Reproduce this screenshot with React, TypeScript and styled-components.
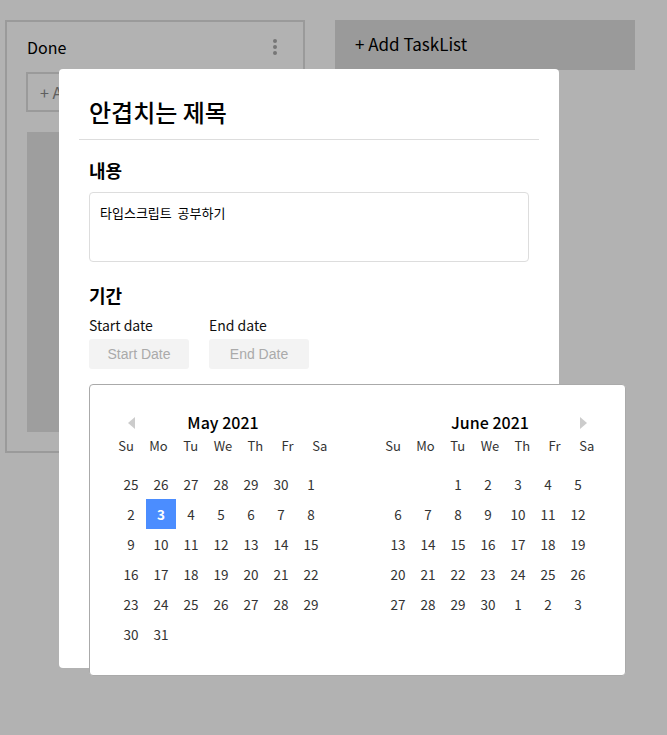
import React from 'react';
import styled, { createGlobalStyle } from 'styled-components';

const GlobalStyle = createGlobalStyle`
	* {
		box-sizing: border-box;
	}
	body {
		margin: 0;
		background: #ffffff;
		font-family: 'Noto Sans CJK KR', 'Noto Sans', sans-serif;
		color: #000;
	}
`;

const Board = styled.main`
	display: flex;
	align-items: flex-start;
	gap: 30px;
	padding: 20px 0 0 5px;
`;

const List = styled.section`
	width: 300px;
	height: 433px;
	border: 2px solid #dddddd;
	padding: 0 20px 19px 19px;
	display: flex;
	flex-direction: column;
`;

const ListHeader = styled.header`
	height: 50px;
	display: flex;
	align-items: center;
	justify-content: space-between;
	padding: 0 6px 0 1px;
	font-size: 16px;
`;

const AddTask = styled.div`
	height: 40px;
	border: 2px solid #dddddd;
	display: flex;
	align-items: center;
	padding-left: 12px;
	font-size: 16px;
	color: #888;
`;

const TaskBlock = styled.div`
	flex: 1;
	margin: 20px 0 0 1px;
	background: #e2e2e2;
`;

const AddList = styled.div`
	width: 300px;
	height: 50px;
	background: #dddddd;
	display: flex;
	align-items: center;
	padding: 0 0 3px 20px;
	font-size: 17px;
`;

const Overlay = styled.div`
	position: fixed;
	inset: 0;
	background: rgba(0, 0, 0, 0.3);
	padding: 69px 0 0 59px;
`;

const Modal = styled.div`
	width: 500px;
	height: 599px;
	background: #fff;
	border-radius: 4px;
`;

const ModalHeader = styled.div`
	margin: 0 20px;
	padding: 25px 10px 9px;
	border-bottom: 1px solid #dddddd;
`;

const Title = styled.h2`
	margin: 0;
	font-size: 24px;
	font-weight: 500;
	line-height: 36px;
`;

const ModalBody = styled.div`
	padding: 0 30px;
`;

const Label = styled.h3<{ $top: number }>`
	margin: ${({ $top }) => $top}px 0 0;
	font-size: 18px;
	font-weight: 700;
	line-height: 27px;
`;

const Content = styled.div`
	margin-top: 8px;
	height: 70px;
	border: 1px solid #dddddd;
	border-radius: 4px;
	padding: 10px;
	font-size: 13px;
	line-height: 20px;
	white-space: pre;
`;

const DateRow = styled.div`
	position: relative;
	display: flex;
	gap: 20px;
	margin-top: 6px;
`;

const DateField = styled.label`
	display: flex;
	flex-direction: column;
	gap: 4px;
	width: 100px;
	font-size: 14px;
	line-height: 20px;
	color: #111;
`;

const DateInput = styled.input`
	width: 100px;
	height: 30px;
	border: none;
	border-radius: 3px;
	background: #f3f3f3;
	text-align: center;
	font-family: 'Liberation Sans', Arial, sans-serif;
	font-size: 14px;

	&::placeholder {
		color: #aaaaaa;
	}
`;

const Picker = styled.div`
	position: absolute;
	top: calc(100% + 15px);
	left: 0;
	width: 537px;
	height: 292px;
	background: #fff;
	border: 1px solid #aaaaaa;
	border-radius: 4px;
	padding-top: 27px;
	display: flex;
`;

const Arrow = styled.span<{ $side: 'left' | 'right' }>`
	position: absolute;
	top: 32px;
	${({ $side }) => ($side === 'left' ? 'left: 38px;' : 'right: 38px;')}
	width: 0;
	height: 0;
	border-top: 6px solid transparent;
	border-bottom: 6px solid transparent;
	${({ $side }) =>
		$side === 'left' ? 'border-right: 7px solid #cccccc;' : 'border-left: 7px solid #cccccc;'}
`;

const Month = styled.div`
	width: 267px;
	padding-left: 20px;
`;

const MonthTitle = styled.div`
	width: 226px;
	text-align: center;
	font-size: 16px;
	font-weight: 500;
	line-height: 20px;
`;

const DayNames = styled.div`
	width: 226px;
	display: grid;
	grid-template-columns: repeat(7, 1fr);
	height: 26px;
	align-items: center;
	font-size: 13px;
	color: #333;
	text-align: center;
`;

const Days = styled.div`
	margin: 11px 0 0 6px;
	width: 210px;
	display: grid;
	grid-template-columns: repeat(7, 30px);
	grid-auto-rows: 30px;
`;

const Day = styled.span<{ $selected?: boolean }>`
	display: flex;
	align-items: center;
	justify-content: center;
	font-size: 13.5px;
	color: ${({ $selected }) => ($selected ? '#fff' : '#333')};
	background: ${({ $selected }) => ($selected ? '#4b8dff' : 'transparent')};
	font-weight: ${({ $selected }) => ($selected ? 700 : 400)};
`;

const Dots = () => (
	<svg width="4" height="16" viewBox="0 0 4 16">
		<circle cx="2" cy="2" r="2" fill="#aaa" />
		<circle cx="2" cy="8" r="2" fill="#aaa" />
		<circle cx="2" cy="14" r="2" fill="#aaa" />
	</svg>
);

const weekdays = ['Su', 'Mo', 'Tu', 'We', 'Th', 'Fr', 'Sa'];

const range = (from: number, to: number) =>
	Array.from({ length: to - from + 1 }, (_, i) => String(from + i));

const months = [
	{
		title: 'May 2021',
		days: [...range(25, 30), ...range(1, 31)],
		selected: 8,
	},
	{
		title: 'June 2021',
		days: ['', '', ...range(1, 30), ...range(1, 3)],
		selected: -1,
	},
];

const App = () => {
	return (
		<>
			<GlobalStyle />
			<Board>
				<List>
					<ListHeader>
						<span>Done</span>
						<Dots />
					</ListHeader>
					<AddTask>+ Add Task</AddTask>
					<TaskBlock />
				</List>
				<AddList>+ Add TaskList</AddList>
			</Board>
			<Overlay>
				<Modal>
					<ModalHeader>
						<Title>안겹치는 제목</Title>
					</ModalHeader>
					<ModalBody>
						<Label $top={17}>내용</Label>
						<Content>{'타입스크립트  공부하기'}</Content>
						<Label $top={20}>기간</Label>
						<DateRow>
							<DateField>
								Start date
								<DateInput placeholder="Start Date" readOnly />
							</DateField>
							<DateField>
								End date
								<DateInput placeholder="End Date" readOnly />
							</DateField>
							<Picker>
								<Arrow $side="left" />
								<Arrow $side="right" />
								{months.map((m) => (
									<Month key={m.title}>
										<MonthTitle>{m.title}</MonthTitle>
										<DayNames>
											{weekdays.map((w) => (
												<span key={w}>{w}</span>
											))}
										</DayNames>
										<Days>
											{m.days.map((d, i) => (
												<Day key={i} $selected={i === m.selected}>
													{d}
												</Day>
											))}
										</Days>
									</Month>
								))}
							</Picker>
						</DateRow>
					</ModalBody>
				</Modal>
			</Overlay>
		</>
	);
};

export default App;
